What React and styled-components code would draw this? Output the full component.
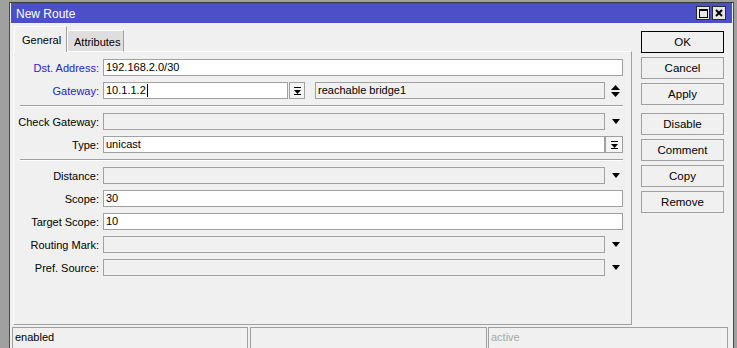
import React from 'react'
import styled, { createGlobalStyle } from 'styled-components'

const GlobalStyle = createGlobalStyle`
  html, body {
    margin: 0;
    padding: 0;
    background: #a0a0a0;
    overflow: hidden;
    font-family: "Liberation Sans", Arial, sans-serif;
    font-size: 11px;
    color: #000;
  }
`

const Screen = styled.div`
  padding: 2px 0 0 9px;
  height: 346px;
  overflow: hidden;
`

const Window = styled.div`
  width: 725px;
  height: 360px;
  box-sizing: border-box;
  border: 1px solid #4a4a4a;
  border-top-color: #3a3a3a;
  padding: 0 1px 1px 1px;
  background: #f0f0f0;
  display: flex;
  flex-direction: column;
`

const TitleBar = styled.div`
  height: 20px;
  background: #4b50c8;
  display: flex;
  align-items: center;
  padding: 0 6px 0 5px;
  color: #fff;
  font-size: 12px;
`

const TitleText = styled.div`
  flex: 1;
  padding-top: 1px;
`

const TitleButton = styled.div`
  width: 14px;
  height: 14px;
  box-sizing: border-box;
  border: 1px solid #2a2a2a;
  background: #e6e6e6;
  display: flex;
  align-items: center;
  justify-content: center;
  margin-left: 2px;
`

const Body = styled.div`
  display: flex;
  padding-left: 2px;
`

const Left = styled.div`
  width: 619px;
  display: flex;
  flex-direction: column;
`

const TabStrip = styled.div`
  display: flex;
  align-items: flex-end;
  padding: 3px 0 0 1px;
  height: 29px;
  box-sizing: border-box;
  position: relative;
  z-index: 1;
  margin-bottom: -1px;
`

const Tab = styled.div`
  box-sizing: border-box;
  height: ${p => (p.$active ? '26px' : '22px')};
  width: ${p => p.$w}px;
  padding-left: ${p => (p.$active ? 7 : 6)}px;
  padding-top: ${p => (p.$active ? 7 : 5)}px;
  background: ${p => (p.$active ? '#f0f0f0' : '#dedede')};
  border: 1px solid #a0a0a0;
  border-left-color: #fff;
  border-top-color: #fff;
  border-bottom: ${p => (p.$active ? 'none' : '1px solid #fff')};
  color: #000;
`

const Panel = styled.div`
  height: 274px;
  box-sizing: border-box;
  border: 1px solid #a0a0a0;
  border-top-color: #fff;
  border-left-color: #fff;
  padding: 7px 8px 0 0;
  display: flex;
  flex-direction: column;
  gap: 6px;
`

const Row = styled.div`
  display: flex;
  align-items: center;
  height: 17px;
`

const Label = styled.div`
  width: 89px;
  flex: none;
  box-sizing: border-box;
  padding-right: 4px;
  text-align: right;
  white-space: nowrap;
  color: ${p => (p.$required ? '#2323c8' : '#000')};
`

const Field = styled.div`
  box-sizing: border-box;
  height: 17px;
  border: 1px solid #a0a0a0;
  background: ${p => (p.$readonly ? '#f0f0f0' : '#fff')};
  padding-left: 2px;
  line-height: 15px;
  white-space: nowrap;
  overflow: hidden;
  display: flex;
  align-items: center;
  flex: ${p => (p.$w ? 'none' : '1')};
  width: ${p => (p.$w ? `${p.$w}px` : 'auto')};
  margin-left: ${p => p.$ml || 0}px;
`

const Caret = styled.span`
  display: inline-block;
  width: 1px;
  height: 13px;
  background: #000;
  margin-left: 1px;
`

const ArrowSlot = styled.div`
  width: 18px;
  flex: none;
  display: flex;
  justify-content: center;
  padding-left: 3px;
  box-sizing: border-box;
`

const SmallButton = styled.div`
  width: ${p => p.$w}px;
  height: 17px;
  box-sizing: border-box;
  flex: none;
  border: 1px solid #a0a0a0;
  background: #f4f4f4;
  display: flex;
  align-items: center;
  justify-content: center;
  margin-left: ${p => p.$ml || 0}px;
`

const Separator = styled.div`
  border-top: 1px solid #a0a0a0;
  border-bottom: 1px solid #fff;
  height: 0;
  margin-left: 6px;
`

const Right = styled.div`
  margin-left: 9px;
  padding-top: 8px;
  display: flex;
  flex-direction: column;
  gap: 4px;
`

const Button = styled.div`
  width: 83px;
  height: 22px;
  box-sizing: border-box;
  border: 1px solid ${p => (p.$default ? '#000' : '#a0a0a0')};
  background: #f0f0f0;
  display: flex;
  align-items: center;
  justify-content: center;
  font-size: 11.5px;
  margin-top: ${p => p.$mt || 0}px;
`

const StatusBar = styled.div`
  display: flex;
  padding-left: 1px;
  margin-top: 2px;
`

const StatusCell = styled.div`
  box-sizing: border-box;
  width: ${p => p.$w}px;
  height: 22px;
  border: 1px solid #a0a0a0;
  border-bottom: none;
  margin-right: ${p => p.$mr || 0}px;
  padding: 3px 0 0 2px;
  color: ${p => (p.$dim ? '#a8a8a8' : '#000')};
`

const DownArrow = () => (
  <svg width="8" height="5" viewBox="0 0 8 5">
    <polygon points="0,0 8,0 4,5" fill="#000" />
  </svg>
)

const UpDown = () => (
  <svg width="9" height="12" viewBox="0 0 9 12">
    <polygon points="0,5 9,5 4.5,0" fill="#000" />
    <polygon points="0,7 9,7 4.5,12" fill="#000" />
  </svg>
)

const BarDown = () => (
  <svg width="7" height="8" viewBox="0 0 7 8">
    <rect x="0" y="0" width="7" height="1" fill="#000" />
    <polygon points="0,3 7,3 3.5,7" fill="#000" />
    <rect x="0" y="7" width="7" height="1" fill="#000" />
  </svg>
)

const MaxIcon = () => (
  <svg width="9" height="9" viewBox="0 0 9 9">
    <rect x="0.5" y="1" width="8" height="7.5" fill="none" stroke="#000" strokeWidth="1" />
    <rect x="0" y="0" width="9" height="2" fill="#000" />
  </svg>
)

const CloseIcon = () => (
  <svg width="8" height="8" viewBox="0 0 8 8">
    <path d="M1 1 L7 7 M7 1 L1 7" stroke="#000" strokeWidth="2" />
  </svg>
)

const SimpleRow = ({ label, value, readonly, arrow, required }) => (
  <Row>
    <Label $required={required}>{label}</Label>
    <Field $readonly={readonly}>{value}</Field>
    {arrow && <ArrowSlot><DownArrow /></ArrowSlot>}
  </Row>
)

export default function App() {
  return (
    <>
      <GlobalStyle />
      <Screen>
        <Window>
          <TitleBar>
            <TitleText>New Route</TitleText>
            <TitleButton><MaxIcon /></TitleButton>
            <TitleButton><CloseIcon /></TitleButton>
          </TitleBar>
          <Body>
            <Left>
              <TabStrip>
                <Tab $active $w={53}>General</Tab>
                <Tab $w={57}>Attributes</Tab>
              </TabStrip>
              <Panel>
                <SimpleRow label="Dst. Address:" value="192.168.2.0/30" required />
                <Row>
                  <Label $required>Gateway:</Label>
                  <Field $w={185}>10.1.1.2<Caret /></Field>
                  <SmallButton $w={16} $ml={1}><BarDown /></SmallButton>
                  <Field $readonly $ml={10}>reachable bridge1</Field>
                  <ArrowSlot><UpDown /></ArrowSlot>
                </Row>
                <Separator />
                <SimpleRow label="Check Gateway:" readonly arrow />
                <Row>
                  <Label>Type:</Label>
                  <Field>unicast</Field>
                  <SmallButton $w={18}><BarDown /></SmallButton>
                </Row>
                <Separator />
                <SimpleRow label="Distance:" readonly arrow />
                <SimpleRow label="Scope:" value="30" />
                <SimpleRow label="Target Scope:" value="10" />
                <SimpleRow label="Routing Mark:" readonly arrow />
                <SimpleRow label="Pref. Source:" readonly arrow />
              </Panel>
            </Left>
            <Right>
              <Button $default>OK</Button>
              <Button>Cancel</Button>
              <Button>Apply</Button>
              <Button $mt={4}>Disable</Button>
              <Button>Comment</Button>
              <Button>Copy</Button>
              <Button>Remove</Button>
            </Right>
          </Body>
          <StatusBar>
            <StatusCell $w={236} $mr={2}>enabled</StatusCell>
            <StatusCell $w={237} $mr={1}></StatusCell>
            <StatusCell $w={240} $dim>active</StatusCell>
          </StatusBar>
        </Window>
      </Screen>
    </>
  )
}
